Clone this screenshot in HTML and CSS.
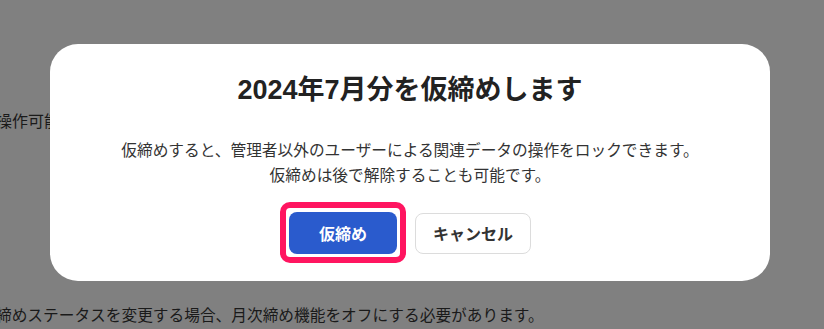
FILE: index.html
```html
<!DOCTYPE html>
<html lang="ja">
<head>
<meta charset="utf-8">
<title>仮締め</title>
<link rel="stylesheet" href="styles.css">
</head>
<body>
<div class="page">
  <p class="bg-line bg-line-top">操作可能</p>
  <p class="bg-line bg-line-bottom">締めステータスを変更する場合、月次締め機能をオフにする必要があります。</p>
  <div class="dialog">
    <h1 class="dialog-title">2024年7月分を仮締めします</h1>
    <p class="dialog-text">仮締めすると、管理者以外のユーザーによる関連データの操作をロックできます。<br>仮締めは後で解除することも可能です。</p>
    <div class="dialog-actions">
      <button class="btn btn-primary">仮締め</button>
      <button class="btn btn-secondary">キャンセル</button>
    </div>
  </div>
</div>
</body>
</html>
```

FILE: styles.css
```css
html, body {
  margin: 0;
  padding: 0;
}
body {
  background: #808080;
  font-family: "Liberation Sans", "Noto Sans CJK JP", sans-serif;
  color: #1a1a1a;
  width: 824px;
  height: 329px;
  overflow: hidden;
}
.page {
  position: relative;
  width: 824px;
  height: 329px;
  overflow: hidden;
  display: flex;
  flex-direction: column;
}
.bg-line {
  margin: 0;
  font-size: 16px;
  line-height: 24px;
  white-space: nowrap;
  color: #1a1a1a;
}
.bg-line-top {
  margin-top: 110px;
  margin-left: -4px;
}
.bg-line-bottom {
  margin-top: 170px;
  margin-left: -4px;
  font-size: 15.7px;
}
.dialog {
  position: absolute;
  left: 50px;
  top: 44px;
  width: 720px;
  height: 237px;
  box-sizing: border-box;
  background: #fff;
  border-radius: 28px;
  padding: 28px 40px 0;
  display: flex;
  flex-direction: column;
  align-items: center;
}
.dialog-title {
  margin: 0;
  font-size: 27px;
  line-height: 36px;
  font-weight: 700;
  color: #222;
}
.dialog-text {
  margin: 30px 0 0;
  font-size: 15.7px;
  line-height: 25px;
  text-align: center;
  color: #333;
}
.dialog-actions {
  margin-top: 24px;
  display: flex;
  align-items: center;
  gap: 18px;
}
.btn {
  font-family: "Liberation Sans", "Noto Sans CJK JP", sans-serif;
  font-size: 16px;
  font-weight: 700;
  border-radius: 8px;
  box-sizing: border-box;
  cursor: pointer;
  padding: 0;
}
.btn-primary {
  position: relative;
  width: 108px;
  height: 42px;
  background: #2a5bcd;
  color: #fff;
  border: none;
}
.btn-primary::after {
  content: "";
  position: absolute;
  left: -9px;
  top: -10px;
  right: -9px;
  bottom: -9px;
  border: 6px solid #ff1560;
  border-radius: 10px;
}
.btn-secondary {
  width: 116px;
  height: 41px;
  background: #fff;
  color: #333;
  border: 1px solid #dcdcdc;
}
```
